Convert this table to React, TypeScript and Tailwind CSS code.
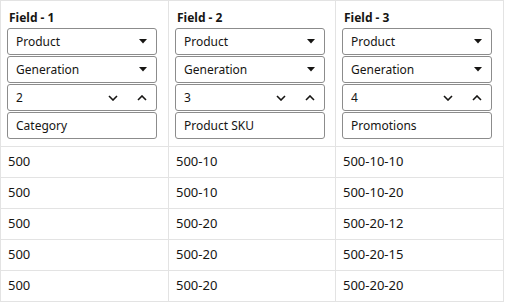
import React from "react";

type Field = { title: string; value: string; last: string };

const fields: Field[] = [
  { title: "Field - 1", value: "2", last: "Category" },
  { title: "Field - 2", value: "3", last: "Product SKU" },
  { title: "Field - 3", value: "4", last: "Promotions" },
];

const rows = [
  ["500", "500-10", "500-10-10"],
  ["500", "500-10", "500-10-20"],
  ["500", "500-20", "500-20-12"],
  ["500", "500-20", "500-20-15"],
  ["500", "500-20", "500-20-20"],
];

const widths = ["w-[168px]", "w-[167px]", "w-[168px]"];

const Caret = () => (
  <svg width="8" height="5" viewBox="0 0 8 5" className="text-[#161513]">
    <path d="M0 0 H8 L4 4.5 Z" fill="currentColor" />
  </svg>
);

const Chevron = ({ up }: { up?: boolean }) => (
  <svg width="10" height="6" viewBox="0 0 10 6" className="text-[#161513]">
    <path
      d={up ? "M1 5 L5 1 L9 5" : "M1 1 L5 5 L9 1"}
      fill="none"
      stroke="currentColor"
      strokeWidth="1.6"
    />
  </svg>
);

const Box = ({ children }: { children: React.ReactNode }) => (
  <div className="flex items-center h-[27px] mb-[1px] w-[150px] border border-[#8c8c8c] rounded-[3px] pl-2 pr-[9px] bg-white text-[12px]">
    {children}
  </div>
);

export default function App() {
  return (
    <div
      className="w-[504px] border-l border-t border-[#e3e3e3] text-[13px] text-[#161513] bg-white"
      style={{ fontFamily: '"Noto Sans", "Open Sans", sans-serif' }}
    >
      {/* Header */}
      <div className="flex">
        {fields.map((f, i) => (
          <div
            key={f.title}
            className={`${widths[i]} h-[146px] border-r border-b border-[#e3e3e3] pl-[6px] pt-[7px]`}
          >
            <div className="font-bold text-[12px] h-[20px] leading-[20px] pl-[2px]">{f.title}</div>
            <Box>
              <span className="flex-1">Product</span>
              <Caret />
            </Box>
            <Box>
              <span className="flex-1">Generation</span>
              <Caret />
            </Box>
            <Box>
              <span className="flex-1">{f.value}</span>
              <div className="flex items-center gap-[19px]">
                <Chevron />
                <Chevron up />
              </div>
            </Box>
            <Box>
              <span className="flex-1">{f.last}</span>
            </Box>
          </div>
        ))}
      </div>

      {/* Body rows */}
      {rows.map((r, ri) => (
        <div key={ri} className="flex">
          {r.map((c, ci) => (
            <div
              key={ci}
              className={`${widths[ci]} h-[31px] border-r border-b border-[#e3e3e3] pl-[7px] flex items-center`}
            >
              {c}
            </div>
          ))}
        </div>
      ))}
    </div>
  );
}
